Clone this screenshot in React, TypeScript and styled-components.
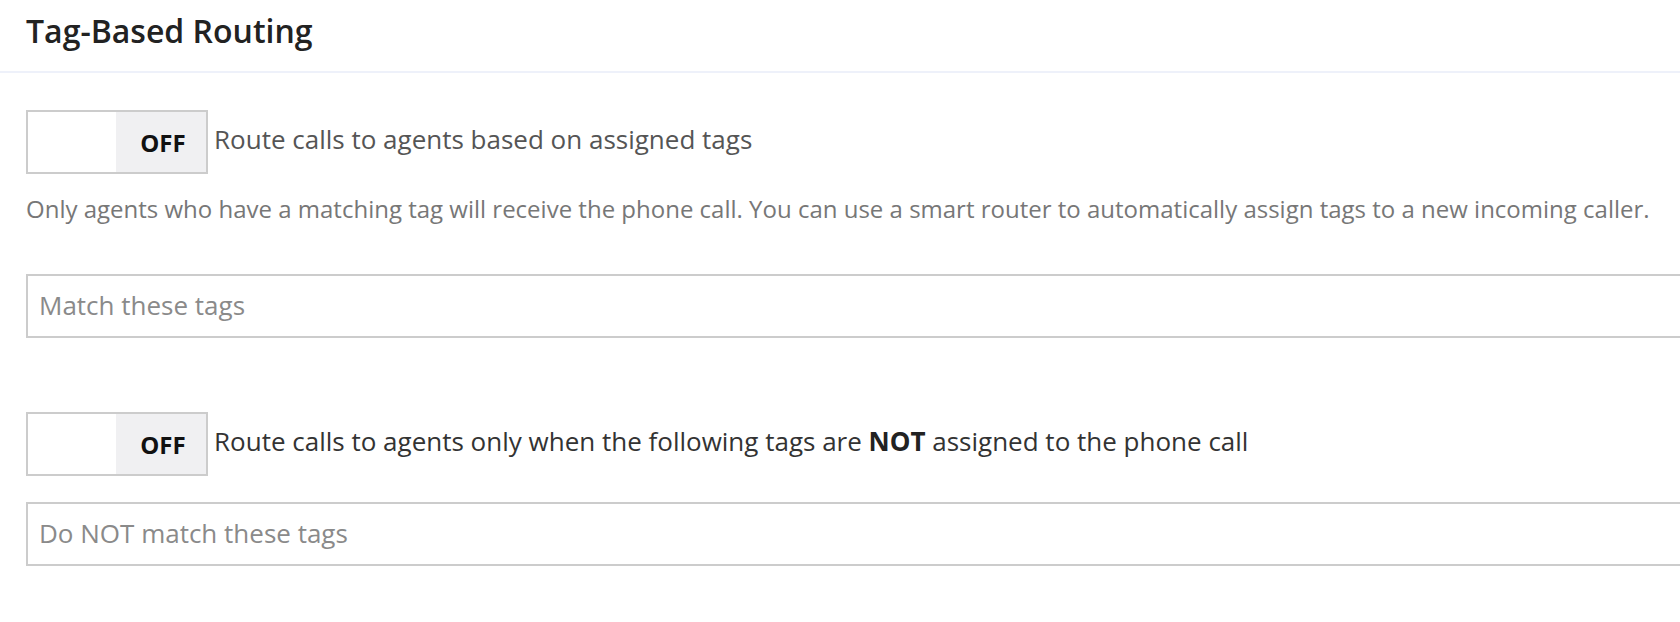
import styled, { createGlobalStyle } from "styled-components";

const GlobalStyle = createGlobalStyle`
  html, body {
    margin: 0;
    padding: 0;
    background: #ffffff;
    overflow: hidden;
  }
  body {
    font-family: "Open Sans", "Liberation Sans", sans-serif;
  }
`;

interface RoutingToggleProps {
  on?: boolean;
  dark?: boolean;
  children: React.ReactNode;
}

const RoutingToggle = ({ on = false, dark, children }: RoutingToggleProps) => {
  return (
    <ToggleRow>
      <Switch type="button" aria-pressed={on}>
        <Handle />
        <SwitchState>{on ? "ON" : "OFF"}</SwitchState>
      </Switch>
      <ToggleLabel $dark={dark}>{children}</ToggleLabel>
    </ToggleRow>
  );
};

export default function App() {
  return (
    <>
      <GlobalStyle />
      <Panel>
        <Header>
          <Title>Tag-Based Routing</Title>
        </Header>
        <Body>
          <RoutingToggle>Route calls to agents based on assigned tags</RoutingToggle>
          <Hint>
            Only agents who have a matching tag will receive the phone call. You
            can use a smart router to automatically assign tags to a new incoming
            caller.
          </Hint>
          <TagInput placeholder="Match these tags" />

          <Spacer />

          <RoutingToggle dark>
            Route calls to agents only when the following tags are <b>NOT</b>{" "}
            assigned to the phone call
          </RoutingToggle>
          <TagInput $tight placeholder="Do NOT match these tags" />
        </Body>
      </Panel>
    </>
  );
}

const Panel = styled.div`
  width: 1760px;
`;

const Header = styled.div`
  padding: 9px 26px 18px;
  border-bottom: 2px solid #eef1fa;
`;

const Title = styled.h1`
  margin: 0;
  font-size: 32px;
  font-weight: 600;
  color: #222222;
  line-height: 44px;
`;

const Body = styled.div`
  padding: 37px 0 0 26px;
  display: flex;
  flex-direction: column;
  align-items: flex-start;
`;

const ToggleRow = styled.div`
  display: flex;
  align-items: center;
  gap: 6px;
`;

const Switch = styled.button`
  display: flex;
  height: 64px;
  width: 182px;
  padding: 0;
  border: 2px solid #cccccc;
  background: #ffffff;
  cursor: pointer;
  font-family: inherit;
`;

const Handle = styled.span`
  width: 88px;
  height: 100%;
  background: #ffffff;
`;

const SwitchState = styled.span`
  flex: 1;
  display: flex;
  align-items: center;
  justify-content: center;
  padding-left: 4px;
  background: #f0f0f2;
  font-size: 24px;
  font-weight: 700;
  color: #111111;
`;

const ToggleLabel = styled.span<{ $dark?: boolean }>`
  font-size: 26px;
  color: ${(p) => (p.$dark ? "#333333" : "#555555")};
  padding-bottom: 6px;

  & b {
    font-weight: 700;
    color: #222222;
  }
`;

const Hint = styled.p`
  margin: 18px 0 0;
  font-size: 24px;
  color: #777777;
`;

const TagInput = styled.input<{ $tight?: boolean }>`
  box-sizing: border-box;
  width: 100%;
  height: 64px;
  margin-top: ${(p) => (p.$tight ? "26px" : "49px")};
  padding: 0 11px 3px;
  border: 2px solid #cccccc;
  border-radius: 0;
  outline: none;
  font-family: inherit;
  font-size: 26px;
  color: #333333;
  background: #ffffff;

  &::placeholder {
    color: #8a8a8a;
  }
`;

const Spacer = styled.div`
  height: 74px;
`;
